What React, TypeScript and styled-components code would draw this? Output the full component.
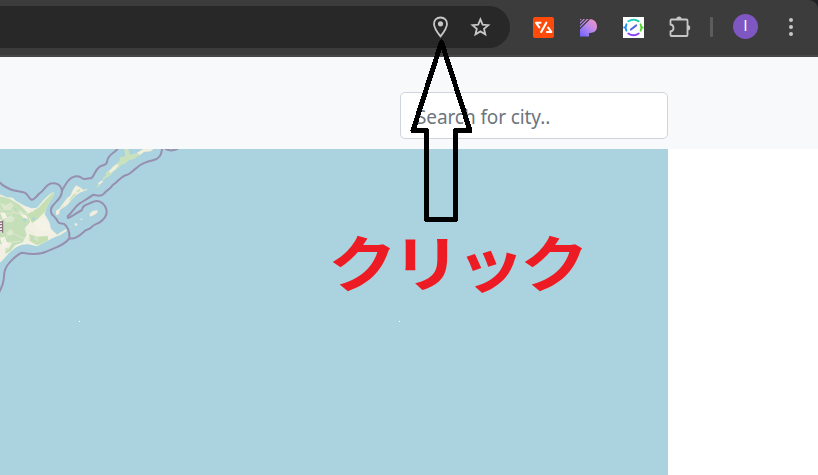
import React from "react";
import styled, { createGlobalStyle } from "styled-components";

const GlobalStyle = createGlobalStyle`
  html, body { margin: 0; padding: 0; background: #fff; overflow: hidden; }
  * { box-sizing: border-box; }
`;

const Screen = styled.div`
  position: relative;
  display: flex;
  flex-direction: column;
  width: 818px;
  height: 475px;
  overflow: hidden;
  background: #fff;
  font-family: "Noto Sans", "Noto Sans CJK JP", sans-serif;
`;

const Backdrop = styled.div`
  height: 57px;
  flex: none;
  background: #202124;
`;

const Toolbar = styled.header`
  display: flex;
  align-items: center;
  height: 57px;
  padding-bottom: 1px;
  background: #3c3c3c;
  border-bottom: 2px solid #474747;
  border-top-right-radius: 9px;
`;

const AddressBar = styled.div`
  display: flex;
  align-items: center;
  justify-content: flex-end;
  gap: 16px;
  width: 510px;
  height: 42px;
  padding-right: 18px;
  background: #282828;
  border-radius: 0 21px 21px 0;
`;

const Icon = styled.svg`
  display: block;
  flex: none;
`;

const Extensions = styled.div`
  display: flex;
  align-items: center;
  gap: 21px;
  margin-left: 21px;
`;

const Divider = styled.div`
  width: 3px;
  height: 20px;
  margin-left: 17px;
  border-radius: 1px;
  background: #5c5c5c;
`;

const Avatar = styled.div`
  display: flex;
  align-items: center;
  justify-content: center;
  width: 25px;
  height: 25px;
  margin-left: 20px;
  margin-bottom: 1px;
  border-radius: 50%;
  background: #7e57c2;
  color: #fff;
  font: 14px/25px Roboto, sans-serif;
`;

const MenuButton = styled.div`
  display: flex;
  flex-direction: column;
  gap: 3px;
  margin-left: 31px;
  margin-bottom: 1px;
`;

const Dot = styled.span`
  width: 4px;
  height: 4px;
  border-radius: 50%;
  background: #c7c7c7;
`;

const SearchRow = styled.div`
  flex: none;
  height: 92px;
  padding: 35px 0 0 400px;
  background: #f8f9fb;
`;

const SearchInput = styled.input`
  display: block;
  width: 268px;
  height: 47px;
  padding: 3px 15px 0;
  border: 1px solid #ced4da;
  border-radius: 5px;
  background: #fff;
  outline: none;
  font: 19px/28px "Noto Sans", sans-serif;
  letter-spacing: -0.1px;
  &::placeholder { color: #6c757d; opacity: 1; }
`;

const MapArea = styled.main`
  width: 668px;
  height: 326px;
  background: #aad3df;
`;

const Arrow = styled.svg`
  position: absolute;
  left: 405px;
  top: 34px;
`;

const Callout = styled.div`
  position: absolute;
  left: 328px;
  top: 213px;
  color: #ed1c24;
  font: 700 69px/94px "Noto Sans CJK JP", sans-serif;
  letter-spacing: -5px;
  white-space: nowrap;
  transform: scaleY(0.89);
`;

const MapDrawing = () => (
  <Icon width="668" height="326" viewBox="0 12 2004 978">
    <defs>
      <filter id="soft"><feGaussianBlur stdDeviation="1.5" /></filter>
      <clipPath id="land">
        <path d="M0 148L20 157L38 158L48 168L74 182L95 190L111 188L130 166L151 146L161 141L160 153L148 172L139 190L134 208L143 222L150 237L152 250L160 259L172 269L195 254L200 257L180 270L160 278L140 289L122 298L111 304L85 298L66 299L48 307L27 324L12 341L0 353Z" />
      </clipPath>
    </defs>
    <g filter="url(#soft)">
      <g clipPath="url(#land)">
        <path fill="#f1f0e2" d="M0 130H210V360H0Z" />
        <path fill="#c5dfb9" d="M0 154L30 162L60 180L82 203L90 232L74 250L80 270L68 292L45 301L32 318L16 326L17 302L0 296Z" />
        <path fill="#c5dfb3" d="M82 208L115 188L160 141L160 153L138 198L124 211L110 226L96 234ZM88 267L110 275L143 273L145 286L112 301L88 287Z" />
        <path fill="#dbe7cc" d="M0 174L16 180L34 172L41 182L29 196L12 196ZM12 222L34 210L45 221L36 232L17 231ZM18 267L30 251L41 259L35 272ZM54 199L64 196L72 207L64 214Z" />
        <path fill="#f5f2e7" d="M0 202L15 204L22 218L8 222ZM0 278L14 275L20 291L36 295L25 311L8 304ZM61 207L79 211L84 222L70 218ZM104 229L128 218L146 230L152 253L130 261L106 246Z" />
        <path fill="none" stroke="#e8ebd5" strokeWidth="2" d="M0 192L18 207L40 203L68 208L102 199M0 304L19 274L35 263L68 279L116 282M17 318L30 292L62 288M75 250L102 266L115 291M27 191L45 203" />
        <path fill="#aad3df" d="M70 220L78 221L76 231L70 229ZM95 220L104 215L105 223L98 227ZM44 188L50 192L45 194ZM92 280L99 278L98 284Z" />
      </g>
      <path fill="#f2eede" d="M168 197L178 191L190 174L202 158L211 152L219 134L228 121L242 128L250 135L263 131L260 135L242 142L228 151L215 164L204 178L193 187L180 194L177 208L168 210Z" />
      <path fill="#c9e2bd" d="M183 190L194 179L190 187ZM206 168L219 149L229 145L227 150L213 165ZM229 139L239 131L242 135L234 143ZM290 126L296 114L307 106L311 96L318 92L318 81L332 76L337 66L353 53L360 45L359 37L376 34L373 12L385 12L389 29L410 25L430 12H460L453 18L432 20L414 34L400 43L387 45L375 57L366 58L352 72L341 79L330 92L316 100L303 114L296 127Z" />
      <path fill="#f1eede" d="M294 115L304 107L310 109L298 119ZM326 79L337 68L350 57L356 61L345 74L332 84ZM411 23L430 12H460L452 19L433 20L420 30ZM268 207L277 199L291 195L293 202L284 209L271 215ZM223 236L229 234L233 240L226 243ZM241 222L246 221L248 225L242 225ZM208 244L212 244L211 247ZM173 268L198 253L201 257L176 272Z" />
      <path fill="#f2eee5" d="M0 224L11 224V262H0Z" />
      <path fill="none" stroke="#88707f" strokeWidth="4" d="M0 232L8 229V263M0 239H7M0 248H7M0 257H7" />
      <g fill="none" stroke="#978faf" strokeWidth="6" strokeLinejoin="round" strokeLinecap="round">
        <path d="M-3 112C3 113 5 120 12 123L29 132C43 139 60 138 74 143C84 148 86 160 94 164C104 166 110 151 118 146C134 137 138 115 158 115C180 114 192 133 182 153C172 174 149 180 153 201C155 213 167 213 174 231C179 239 190 232 195 239C207 250 209 266 208 280C194 301 163 309 141 319C119 330 93 328 67 323C55 325 46 335 31 350C8 374 14 389 11 404C8 426 3 429-2 441" />
        <path d="M186 137C192 126 198 115 205 107C216 93 232 91 244 98C253 107 258 98 274 100C284 91 284 76 297 67C307 58 319 63 321 51C322 41 329 31 339 24C347 19 350 15 356 8" />
        <path d="M486 12C485 28 478 42 459 46C440 50 423 57 412 67C397 77 393 86 382 89C368 91 357 105 349 112L338 120C331 134 320 134 312 146C303 157 292 151 280 149C267 159 252 167 238 176C222 187 216 205 203 213L204 219C215 216 232 202 246 195C246 178 267 178 280 170C303 162 319 182 320 200C320 217 309 225 299 232C289 238 280 238 273 248C267 256 258 251 252 260C240 271 223 284 208 280" />
        <path d="M494 10C504 18 519 17 532 12" />
      </g>
    </g>
    <path fill="#fff" d="M237 528h3v3h-3ZM1197 528h3v3h-3Z" />
  </Icon>
);

export default function App() {
  return (
    <Screen>
      <GlobalStyle />
      <Backdrop>
        <Toolbar>
          <AddressBar>
            <Icon width="24" height="24" viewBox="0 0 24 24" fill="none" stroke="#c7c7c7" strokeWidth="1.8">
              <path d="M12.5 2.5C8.3 2.5 6 5.4 6 8.9C6 13 9.3 17.3 12.5 21.4C15.7 17.3 19 13 19 8.9C19 5.4 16.7 2.5 12.5 2.5Z" />
              <circle cx="12.5" cy="8.8" r="2.6" fill="#c7c7c7" stroke="none" />
            </Icon>
            <Icon width="24" height="24" viewBox="0 0 24 24" fill="none" stroke="#c7c7c7" strokeWidth="1.8">
              <path d="M12.4 4.3L14.6 9.6L20.3 10.1L16 13.8L17.3 19.3L12.4 16.4L7.5 19.3L8.8 13.8L4.5 10.1L10.2 9.6Z" />
            </Icon>
          </AddressBar>
          <Extensions>
            <Icon width="25" height="24" viewBox="0 0 25 24">
              <rect x="2" y="2" width="21" height="21" rx="2" fill="#ff4a09" />
              <g fill="none" stroke="#fff" strokeWidth="2.1" strokeLinecap="round" strokeLinejoin="round">
                <path d="M9.5 7.7H5L8.3 12.3M15.3 7.7L10.2 17M17.2 12.6L20.4 17H16" />
              </g>
            </Icon>
            <Icon width="24" height="24" viewBox="0 0 24 24">
              <defs>
                <linearGradient id="petal" x1="0.9" y1="0" x2="0.1" y2="1">
                  <stop stopColor="#f394bd" /><stop offset="0.5" stopColor="#b988ee" /><stop offset="1" stopColor="#7464ff" />
                </linearGradient>
              </defs>
              <path fill="url(#petal)" d="M3 4H12C17 4 20 7 20 11.5C20 16 17 18 12 18V21.5H3Z" />
              <path stroke="#3c3c3c" strokeWidth="1.1" d="M2 7.5L6.5 3M2 11L10 3M2 14.5L12.5 4" />
            </Icon>
            <Icon width="24" height="24" viewBox="0 0 24 24">
              <defs>
                <linearGradient id="topArc"><stop stopColor="#14cbd2" /><stop offset="1" stopColor="#13c998" /></linearGradient>
              </defs>
              <path fill="#fff" d="M1 2h21v21H1Z" />
              <g fill="none" strokeWidth="1.9" strokeLinecap="round" transform="translate(-.5 0)">
                <path stroke="url(#topArc)" d="M6.8 6.3Q12 2.9 17.2 6.3" />
                <path stroke="#873ff5" d="M6.8 18.5Q12 21.9 17.2 18.5" />
                <path stroke="#1a8ff0" d="M4.9 9.3Q3.4 12.5 4.9 15.6M2.7 12.5H4" />
                <path stroke="#4dd82b" d="M19.1 9.3Q20.6 12.5 19.1 15.6M20 12.5H21.3" />
                <path stroke="#5367e8" strokeWidth="2.2" d="M9.4 14.5L14.6 10.5" />
              </g>
            </Icon>
            <Icon width="26" height="26" viewBox="0.5 0 26 26">
              <path d="M5 5.5H20Q21 5.5 21 6.5V21Q21 22 20 22H5Q4 22 4 21V17.5C8 17 8 11 4 10.5V6.5Q4 5.5 5 5.5Z" fill="none" stroke="#c7c7c7" strokeWidth="1.8" />
              <path d="M9.9 5a2.6 2.6 0 0 1 5.2 0ZM21 11a2.7 2.7 0 0 1 0 5.4Z" fill="#c7c7c7" />
            </Icon>
          </Extensions>
          <Divider />
          <Avatar>I</Avatar>
          <MenuButton><Dot /><Dot /><Dot /></MenuButton>
        </Toolbar>
      </Backdrop>
      <SearchRow><SearchInput placeholder="Search for city.." /></SearchRow>
      <MapArea><MapDrawing /></MapArea>
      <Arrow width="72" height="192" viewBox="0 0 72 192" shapeRendering="crispEdges" fill="none" stroke="#000" strokeWidth="5" strokeLinejoin="round">
        <path d="M36.5 8L8 96.5H21.5V185.5H50.5V96.5H65Z" />
      </Arrow>
      <Callout>クリック</Callout>
    </Screen>
  );
}
